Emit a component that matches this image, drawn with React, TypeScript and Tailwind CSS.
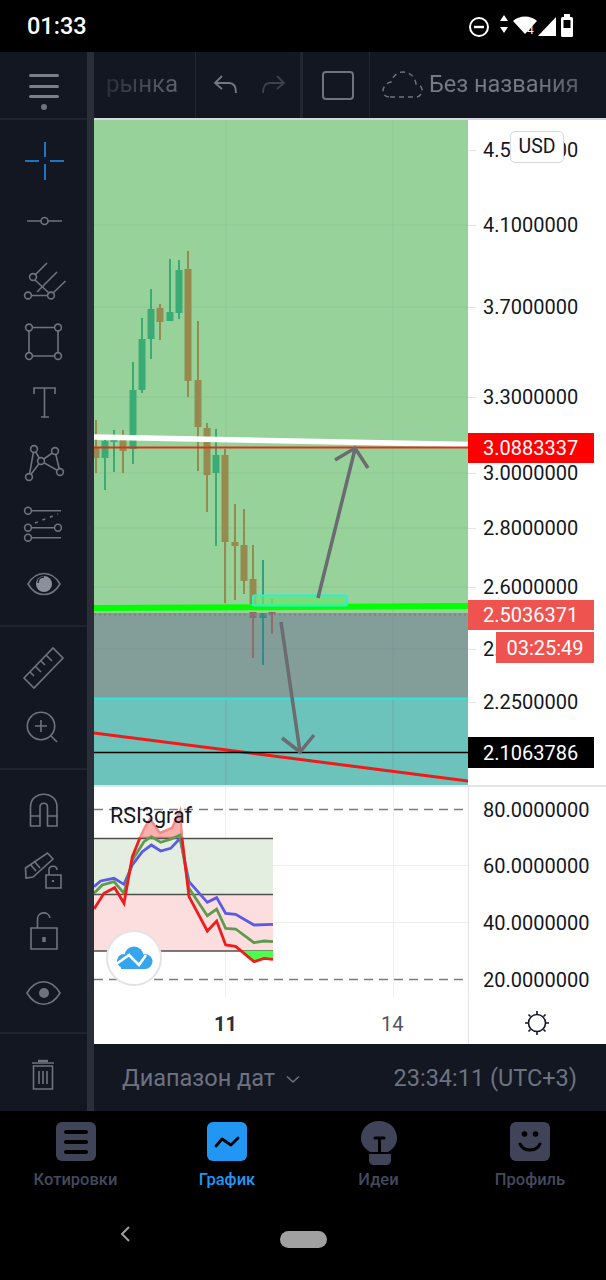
import type { ReactNode } from 'react';

const ROBOTO = "font-['Roboto',sans-serif]";
const ICON = '#6f7380';

// x, wick top, wick bottom, body top, body bottom, colour
const UP = '#3aab74';
const DOWN = '#968a4f';
const CANDLES: [number, number, number, number, number, string][] = [
  [96, 420, 473, 448, 458, DOWN],
  [105, 435, 490, 441, 458, UP],
  [114, 430, 472, 439, 442, UP],
  [123, 430, 473, 440, 451, DOWN],
  [133, 362, 464, 390, 449, UP],
  [142, 318, 393, 339, 390, UP],
  [151, 289, 359, 309, 339, UP],
  [160, 304, 340, 308, 322, DOWN],
  [170, 259, 321, 312, 321, UP],
  [179, 260, 319, 270, 313, UP],
  [188, 251, 397, 269, 381, DOWN],
  [198, 321, 471, 380, 427, DOWN],
  [207, 423, 512, 428, 475, DOWN],
  [216, 429, 546, 455, 473, UP],
  [225, 449, 603, 455, 542, DOWN],
  [235, 504, 600, 542, 546, DOWN],
  [244, 509, 594, 545, 581, DOWN],
  [253, 545, 606, 579, 604, DOWN],
  [263, 560, 606, 606, 606, '#2f9f88'],
  [272, 599, 606, 600, 600, DOWN],
];
const LOW_CANDLES: [number, number, number, number, number, string][] = [
  [253, 612, 658, 612, 618, '#916b6b'],
  [263, 613, 665, 613, 618, '#2f8f88'],
  [272, 612, 634, 612, 614, '#916b6b'],
];

const PRICES: [string, number][] = [
  ['4.5000000', 150],
  ['4.1000000', 225],
  ['3.7000000', 307],
  ['3.3000000', 397],
  ['3.0000000', 473],
  ['2.8000000', 528],
  ['2.6000000', 587],
  ['2.4000000', 649],
  ['2.2500000', 702],
];
const RSI_LEVELS: [string, number][] = [
  ['80.0000000', 810],
  ['60.0000000', 866],
  ['40.0000000', 923],
  ['20.0000000', 980],
];

// zoomed coords of the RSI crop -> page coords
const pts = (list: number[][]) => list.map(([x, y]) => `${94 + x / 3},${785 + y / 3}`).join(' ');

const RSI_BLUE = [[0, 305], [20, 288], [60, 280], [90, 298], [115, 240], [145, 200], [172, 180], [200, 198], [230, 190], [258, 160], [285, 290], [340, 352], [368, 338], [395, 385], [425, 388], [480, 420], [537, 418]];
const RSI_GREEN = [[0, 325], [25, 300], [60, 290], [90, 325], [115, 225], [150, 170], [172, 155], [200, 172], [232, 162], [258, 150], [285, 310], [340, 392], [368, 372], [395, 430], [425, 432], [480, 473], [510, 468], [537, 470]];
const RSI_RED_IN = [[0, 372], [30, 325], [62, 308], [90, 355], [115, 215], [138, 158]];
const RSI_RED_OUT = [[264, 158], [285, 335], [340, 438], [368, 408], [395, 480], [425, 484], [480, 530], [510, 520], [537, 523]];
const RSI_PEAK = [[138, 158], [153, 126], [168, 102], [198, 144], [234, 129], [258, 78], [264, 158]];
const RSI_LOW = [[437, 497], [480, 530], [510, 520], [537, 523], [537, 497]];

function Tool({ top, children }: { top: number; children: ReactNode }) {
  return (
    <div className="h-[60px] w-[87px]">
      <svg width="87" height="60" viewBox={`0 ${top} 87 60`} fill="none" stroke={ICON} strokeWidth="1.6">
        {children}
      </svg>
    </div>
  );
}

function Circles({ list, r = 3.4 }: { list: number[][]; r?: number }) {
  return (
    <>
      {list.map(([x, y]) => (
        <circle key={`${x}-${y}`} cx={x} cy={y} r={r} fill="#131722" />
      ))}
    </>
  );
}

function Sidebar() {
  return (
    <div className="flex w-[87px] flex-col bg-[#131722]">
      <div className="flex h-[66px] flex-col items-center pt-[22px]">
        <div className="h-[3px] w-[30px] rounded-full bg-[#7b7f8b]" />
        <div className="mt-[7.5px] h-[3px] w-[30px] rounded-full bg-[#7b7f8b]" />
        <div className="mt-[7.5px] h-[3px] w-[30px] rounded-full bg-[#7b7f8b]" />
        <div className="mt-[6px] h-[6px] w-[6px] rounded-full bg-[#6f7380]" />
      </div>

      <div className="flex h-[508px] flex-col border-t-2 border-[#1f232e] pt-[11px]">
        <Tool top={131}>
          <path d="M45 142V157M45 164V180M25 161H39M50 161H64" stroke="#1e74c7" strokeWidth="2" />
        </Tool>
        <Tool top={191}>
          <path d="M27 221H41M48 221H62" />
          <circle cx="44.5" cy="221" r="3.5" />
        </Tool>
        <Tool top={251}>
          <path d="M28 295.5H51M35 275L47 263M37 292L57 272M53 293L65.5 281M35 280L49 293" />
          <Circles list={[[33, 277], [28, 295.5], [51, 295.5]]} />
        </Tool>
        <Tool top={311}>
          <path d="M29 327.5H58V356H29Z" />
          <Circles list={[[29, 327.5], [58, 327.5], [29, 356], [58, 356]]} />
        </Tool>
        <Tool top={371}>
          <path d="M34 394V388H55V394M44.5 388V417M41 417H49" />
        </Tool>
        <Tool top={431}>
          <path d="M29 477L34 449L41 461L55 451L60 472L41 461L29 477" />
          <Circles list={[[34, 449], [55, 451], [41, 461], [29, 477], [60, 472]]} />
        </Tool>
        <Tool top={491}>
          <path d="M28 510.7H61M28 527.7H58M28 537.7H61" />
          <path d="M35 523L58 514" strokeDasharray="3 5" />
          <Circles list={[[28, 510.7], [28, 527.7], [58, 527.7], [28, 537.7]]} />
        </Tool>
        <Tool top={551}>
          <path d="M28 584C36 570 52 570 60 584C52 598 36 598 28 584Z" />
          <circle cx="44" cy="584" r="8" fill="#8b8f9b" stroke="none" />
          <path d="M38 583C38 579 41 577 44 577" stroke="#131722" strokeWidth="1.4" />
        </Tool>
      </div>

      <div className="flex h-[143px] flex-col border-t-2 border-[#1f232e] pt-[10px]">
        <Tool top={636}>
          <path d="M24 677L53 647L63 657L34 687ZM30 671L34 675M35 665L41 671M41 660L45 664M46 654L52 660" />
        </Tool>
        <Tool top={696}>
          <circle cx="41" cy="725" r="13.7" />
          <path d="M51 735L57 741M35 725H47M41 719V731" />
        </Tool>
      </div>

      <div className="flex h-[265px] flex-col border-t-2 border-[#1f232e] pt-[9px]">
        <Tool top={778}>
          <path d="M30.500 825V806C30.500 789 57 789 57 806V825H47.500V806C47.500 801 40 801 40 806V825ZM30.500 815H40M47.500 815H57" />
        </Tool>
        <Tool top={838}>
          <path d="M25.500 867L47.500 852L53 858L33 876L26 877ZM30 863L36 870M34 860L40 867" />
          <path d="M46 874H61V887H46ZM49 874V869C49 864 57 864 57 869" />
          <path d="M53 879V881" strokeWidth="2" />
        </Tool>
        <Tool top={898}>
          <path d="M31 927H57V948H31ZM37.500 927V918C37.500 910 49 910 50 917" />
          <path d="M44 936V941" strokeWidth="3.4" />
        </Tool>
        <Tool top={958}>
          <path d="M27 992C36 977 51 977 60 992C51 1007 36 1007 27 992Z" />
          <circle cx="44" cy="992" r="5" fill={ICON} stroke="none" />
        </Tool>
      </div>

      <div className="flex h-[79px] flex-col border-t-2 border-[#1f232e] pt-[9px]">
        <Tool top={1043}>
          <path d="M32 1063H54M33.500 1066H52.500V1089H33.500ZM39 1071V1084M43 1071V1084M47 1071V1084" />
          <path d="M38 1061H48" strokeWidth="2.400" />
        </Tool>
      </div>
    </div>
  );
}

function TopBar() {
  return (
    <div className="flex h-[66px] items-center overflow-hidden bg-[#131722]">
      <div className="flex h-full w-[102px] items-center justify-end border-r border-[#22262f] pb-[2px] pr-[17px]">
        <span className={`${ROBOTO} bg-gradient-to-r from-[#2c303a] to-[#5d626e] bg-clip-text text-[24px] text-transparent`}>рынка</span>
      </div>
      <div className="flex h-full w-[107px] items-center border-r-[3px] border-[#22262f] pl-[17px]">
        <svg width="26" height="22" viewBox="0 0 26 22" fill="none" strokeWidth="1.800">
          <path d="M9 2L2 9L9 15M2 9H16C21 9 23 13 23 19" stroke="#747985" />
        </svg>
        <svg className="ml-[21px]" width="26" height="22" viewBox="0 0 26 22" fill="none" strokeWidth="1.800">
          <path d="M17 2L24 9L17 15M24 9H10C5 9 3 13 3 19" stroke="#3d414c" />
        </svg>
      </div>
      <div className="flex h-full w-[67px] items-center justify-center border-r border-[#22262f] pl-[3px]">
        <div className="h-[29px] w-[32px] rounded-[4px] border-2 border-[#6f7380]" />
      </div>
      <svg className="ml-[12px]" width="42" height="28" viewBox="0 0 42 28" fill="none" stroke="#6f7380" strokeWidth="1.500" strokeDasharray="5 4">
        <path d="M8 26H34C38 26 41 22 40 18C39 15 37 13 34 13C33 5 27 1 21 1C15 1 11 5 9 11C4 12 1 16 1 20C1 24 4 26 8 26Z" />
      </svg>
      <span className={`${ROBOTO} ml-[5px] mb-[1px] whitespace-nowrap bg-gradient-to-r from-[#757a86] from-70% to-[#565b67] bg-clip-text text-[23.500px] text-transparent`}>Без названия</span>
    </div>
  );
}

function PriceChart() {
  return (
    <svg className="block shrink-0" width="374" height="665" viewBox="94 120 374 665">
      <rect x="94" y="120" width="374" height="665" fill="#98d29b" />
      <path d="M226 120V785M393 120V785M94 225H468M94 307H468M94 397H468M94 473H468M94 528H468M94 587H468" stroke="#8cc692" strokeWidth="1" />
      {CANDLES.map(([x, wt, wb, bt, bb, c]) => (
        <g key={x} fill={c}>
          <rect x={x - 1} y={wt} width="2" height={wb - wt} />
          <rect x={x - 3.5} y={bt} width="7" height={bb - bt} />
        </g>
      ))}
      <rect x="94" y="613" width="374" height="85" fill="#839d99" />
      <rect x="94" y="698" width="374" height="87" fill="#6cc3bc" />
      <path d="M226 613V785M393 613V785M94 649H468" stroke="#7b9692" strokeWidth="1" opacity="0.6" />
      {LOW_CANDLES.map(([x, wt, wb, bt, bb, c]) => (
        <g key={x} fill={c}>
          <rect x={x - 1} y={wt} width="2" height={wb - wt} />
          <rect x={x - 3.5} y={bt} width="7" height={bb - bt} />
        </g>
      ))}
      <path d="M94 437L468 444.500" stroke="#ffffff" strokeWidth="5.500" />
      <path d="M94 447.500H468" stroke="#d9301f" strokeWidth="2" />
      <path d="M94 608L468 606" stroke="#00ff00" strokeWidth="6" />
      <path d="M94 614.500H468" stroke="#8a7f80" strokeWidth="2" strokeDasharray="2 3" />
      <rect x="253" y="595.500" width="94" height="10" rx="1.500" fill="#6de36c" fillOpacity="0.75" stroke="#2aefd5" strokeWidth="2" />
      <path d="M94 698.500H468" stroke="#2ee6e0" strokeWidth="2" />
      <path d="M94 733L468 781" stroke="#f01a1a" strokeWidth="3" />
      <path d="M94 752.500H468" stroke="#000000" strokeWidth="1.500" />
      <g stroke="#6b6b70" strokeWidth="3.500" fill="none">
        <path d="M318 598L355 449M335 460L355 448L368 468" />
        <path d="M281 622L300 752M282 738L300 752L314 735" />
      </g>
    </svg>
  );
}

function RsiChart() {
  return (
    <svg className="block shrink-0" width="374" height="210" viewBox="94 787 374 210">
      <rect x="94" y="787" width="374" height="210" fill="#ffffff" />
      <path d="M225.500 787V997M393.500 787V997M94 865.500H468M94 922.500H468" stroke="#eceef0" strokeWidth="1" />
      <rect x="94" y="838" width="179" height="56" fill="#e3ede0" />
      <rect x="94" y="894" width="179" height="57" fill="#fddede" />
      <path d="M94 809.500H468M94 979.500H468" stroke="#787b86" strokeWidth="1.500" strokeDasharray="9 6" />
      <polygon points={pts(RSI_PEAK)} fill="#fab0ac" stroke="#f58a86" strokeWidth="2.500" />
      <path d="M94 838.500H273M94 894.500H273M94 951H273" stroke="#50504e" strokeWidth="1.500" />
      <polygon points={pts(RSI_LOW)} fill="#4cff4c" />
      <polyline points={pts(RSI_BLUE)} fill="none" stroke="#5a5ae6" strokeWidth="2.800" />
      <polyline points={pts(RSI_GREEN)} fill="none" stroke="#5f9a4e" strokeWidth="2.800" />
      <polyline points={pts(RSI_RED_IN)} fill="none" stroke="#ee1c1c" strokeWidth="2.800" />
      <polyline points={pts(RSI_RED_OUT)} fill="none" stroke="#ee1c1c" strokeWidth="2.800" />
    </svg>
  );
}

function PriceAxis() {
  return (
    <div className={`${ROBOTO} relative h-[665px] w-[138px] bg-white text-[20px] leading-[24px] text-[#131722]`}>
      {PRICES.map(([label, y]) => (
        <span key={label} className="absolute left-[15px] whitespace-nowrap" style={{ top: y - 132 }}>
          {label}
        </span>
      ))}
      {PRICES.map(([label, y]) => (
        <span key={label} className="absolute left-0 h-px w-[8px] bg-[#e3e4e7]" style={{ top: y - 120 }} />
      ))}
      <div className="absolute left-[42px] top-[11px] flex h-[32px] w-[54px] items-center justify-center rounded-[5px] border border-[#d6d8dd] bg-white text-[19.500px]">USD</div>
      <div className="absolute left-0 top-[313px] flex h-[30px] w-[126px] items-center bg-[#ff0000] pl-[15px] text-white">3.0883337</div>
      <div className="absolute left-0 top-[480px] flex h-[30px] w-[126px] items-center bg-[#ef5350] pl-[15px] text-white">2.5036371</div>
      <div className="absolute left-[28px] top-[512px] flex h-[31px] w-[98px] items-center justify-center bg-[#ef5350] text-white">03:25:49</div>
      <div className="absolute left-0 top-[617px] flex h-[31px] w-[126px] items-center bg-black pl-[15px] text-white">2.1063786</div>
    </div>
  );
}

function RsiAxis() {
  return (
    <div className={`${ROBOTO} relative h-[210px] w-[138px] bg-white text-[20px] leading-[24px] text-[#131722]`}>
      {RSI_LEVELS.map(([label, y]) => (
        <span key={label} className="absolute left-[15px] whitespace-nowrap" style={{ top: y - 799 }}>
          {label}
        </span>
      ))}
    </div>
  );
}

function CloudLogo() {
  return (
    <div className="absolute left-[12px] top-[143px] flex h-[56px] w-[56px] items-center justify-center rounded-full border-2 border-[#e3e3e3] bg-white">
      <svg width="38" height="24" viewBox="0 0 38 24">
        <g fill="#35a5ee">
          <circle cx="19" cy="10" r="9.500" />
          <circle cx="9" cy="15" r="7" />
          <circle cx="30" cy="15.500" r="7.500" />
          <rect x="6" y="15" width="24" height="8" />
        </g>
        <path d="M0 19L14 9L24 19L31 9" fill="none" stroke="#ffffff" strokeWidth="2.600" />
      </svg>
    </div>
  );
}

function TabIcon({ name, color }: { name: string; color: string }) {
  if (name === 'list') {
    return (
      <div className="flex h-[39px] w-[40px] flex-col items-center justify-center gap-[6px] rounded-[6px]" style={{ backgroundColor: color }}>
        <div className="h-[4px] w-[24px] rounded-full bg-black" />
        <div className="h-[4px] w-[24px] rounded-full bg-black" />
        <div className="h-[4px] w-[24px] rounded-full bg-black" />
      </div>
    );
  }
  if (name === 'chart') {
    return (
      <div className="flex h-[39px] w-[40px] items-center justify-center rounded-[6px]" style={{ backgroundColor: color }}>
        <svg width="26" height="14" viewBox="0 0 26 14" fill="none" stroke="#000" strokeWidth="2.800" strokeLinecap="round" strokeLinejoin="round">
          <path d="M2 11L8 4L17 10L24 3" />
        </svg>
      </div>
    );
  }
  if (name === 'bulb') {
    return (
      <svg className="-mt-px" width="36" height="44" viewBox="0 0 36 44">
        <path d="M9 31C3 27 0 23 0 17C0 7 8 0 18 0C28 0 36 7 36 17C36 23 33 27 27 31Z" fill={color} />
        <path d="M8 33H30V39C30 42 28 44 25 44H13C10 44 8 42 8 39Z" fill={color} />
        <path d="M14 17H23M18.500 17V31" stroke="#000" strokeWidth="3" strokeLinecap="round" />
      </svg>
    );
  }
  return (
    <div className="flex h-[39px] w-[40px] items-center justify-center rounded-[6px]" style={{ backgroundColor: color }}>
      <svg width="26" height="26" viewBox="0 0 26 26" fill="none">
        <circle cx="7.500" cy="5" r="2.800" fill="#000" />
        <circle cx="18.500" cy="5" r="2.800" fill="#000" />
        <path d="M3 15C7 23 19 23 23 15" stroke="#000" strokeWidth="3" strokeLinecap="round" />
      </svg>
    </div>
  );
}

const TABS = [
  { name: 'list', label: 'Котировки', active: false },
  { name: 'chart', label: 'График', active: true },
  { name: 'bulb', label: 'Идеи', active: false },
  { name: 'smile', label: 'Профиль', active: false },
];

export default function App() {
  return (
    <div className={`${ROBOTO} flex h-[1280px] w-[606px] flex-col overflow-hidden bg-black`}>
      {/* status bar */}
      <div className="flex h-[52px] items-center justify-between pl-[27px] pr-[26px]">
        <span className="pt-[2px] text-[23.500px] font-medium text-white">01:33</span>
        <svg width="111" height="26" viewBox="0 0 111 26" fill="none">
          <circle cx="10" cy="14" r="9" stroke="#fff" strokeWidth="2" />
          <path d="M5 14H15" stroke="#fff" strokeWidth="2.400" />
          <path d="M35 2L39 8H31ZM35 20L39 14H31Z" fill="#fff" />
          <path d="M44 8C50 2 62 2 68 8L56 21Z" fill="#fff" />
          <text x="58" y="21" fontSize="12" fill="#fff" fontFamily="Roboto">4</text>
          <path d="M69 23L87 4V23Z" fill="#fff" />
          <rect x="92" y="4" width="12" height="20" rx="1.500" fill="#fff" />
          <rect x="94.500" y="7" width="7" height="8" fill="#000" />
          <rect x="95" y="1" width="6" height="3" fill="#fff" />
        </svg>
      </div>

      <div className="flex h-[1059px]">
        <Sidebar />
        <div className="w-[7px] bg-[#2a2e39]" />
        <div className="flex w-[512px] flex-col">
          <TopBar />
          <div className="h-[2px] bg-[#d5d8de]" />
          <div className="flex h-[665px]">
            <PriceChart />
            <PriceAxis />
          </div>
          <div className="h-[2px] bg-[#e3e4e7]" />
          <div className="relative flex h-[210px] border-b border-[#e0e3eb]">
            <RsiChart />
            <RsiAxis />
            <span className="absolute left-[16px] top-[16px] text-[21.500px] leading-[26px] text-[#131722]">RSI3graf</span>
            <CloudLogo />
            <div className="absolute left-[374px] top-0 h-full w-px bg-[#e0e3eb]" />
          </div>
          <div className="flex h-[47px] bg-white text-[20px] text-[#131722]">
            <div className="relative w-[374px]">
              <span className="absolute left-[120px] top-[12px] font-bold text-[#2a2e39]">11</span>
              <span className="absolute left-[287px] top-[12px] text-[#50535e]">14</span>
            </div>
            <div className="flex w-[138px] items-center border-l border-[#e0e3eb] pl-[55px] pt-[4px]">
              <svg width="26" height="26" viewBox="0 0 26 26" fill="none" stroke="#131722" strokeWidth="1.600">
                <circle cx="13" cy="13" r="8.500" />
                <path d="M13 1V4M13 22V25M1 13H4M22 13H25M4.500 4.500L6.500 6.500M19.500 19.500L21.500 21.500M4.500 21.500L6.500 19.500M19.500 6.500L21.500 4.500" />
              </svg>
            </div>
          </div>
          <div className="flex h-[67px] items-center justify-between bg-[#131722] pl-[28px] pr-[29px] pt-[3px] text-[23.500px] text-[#6d7280]">
            <div className="flex items-center">
              <span>Диапазон дат</span>
              <svg className="ml-[11px]" width="14" height="9" viewBox="0 0 14 9" fill="none" stroke="#6d7280" strokeWidth="1.600">
                <path d="M1 1.500L7 7L13 1.500" />
              </svg>
            </div>
            <span>23:34:11 (UTC+3)</span>
          </div>
        </div>
      </div>

      {/* bottom tabs */}
      <div className="grid h-[95px] grid-cols-4 pt-[11px]">
        {TABS.map((t) => {
          const color = t.active ? '#2196f3' : '#3f4458';
          return (
            <div key={t.name} className="flex w-[151px] flex-col items-center">
              <div className="flex h-[44px] items-start">
                <TabIcon name={t.name} color={color} />
              </div>
              <span className="mt-[1px] text-[16.500px] font-medium leading-[26px]" style={{ color: t.active ? '#2196f3' : '#434a5e' }}>
                {t.label}
              </span>
            </div>
          );
        })}
      </div>

      {/* nav bar */}
      <div className="relative flex flex-1 items-start justify-center pt-[25px]">
        <svg className="absolute left-[119px] top-[19px]" width="12" height="18" viewBox="0 0 12 18" fill="none" stroke="#a0a0a0" strokeWidth="2">
          <path d="M10 2L3 9L10 16" />
        </svg>
        <div className="h-[17px] w-[47px] rounded-full bg-[#a0a0a0]" />
      </div>
    </div>
  );
}
